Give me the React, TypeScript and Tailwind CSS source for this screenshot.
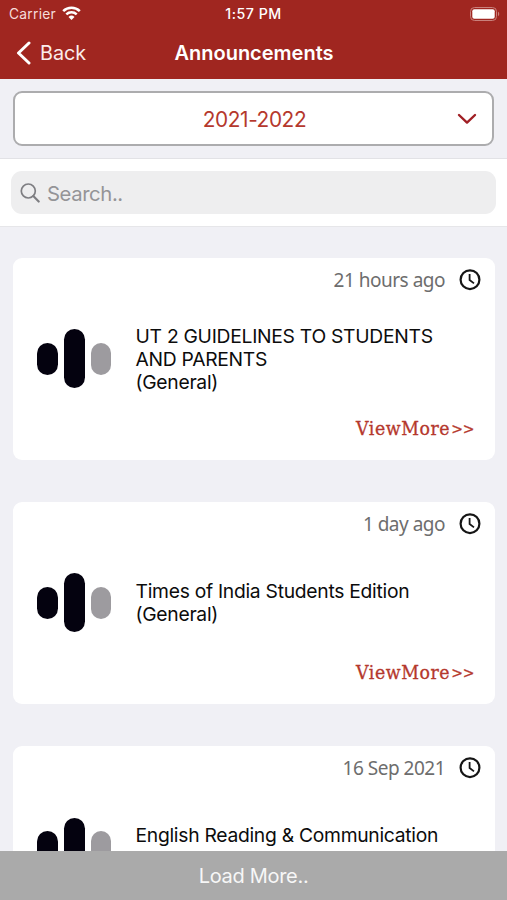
interface Announcement {
  date: string
  lines: string[]
  titleClass: string
  hasMore: boolean
}

const announcements: Announcement[] = [
  {
    date: '21 hours ago',
    lines: ['UT 2 GUIDELINES TO STUDENTS', 'AND PARENTS', '(General)'],
    titleClass: 'mt-[34.5px]',
    hasMore: true,
  },
  {
    date: '1 day ago',
    lines: ['Times of India Students Edition', '(General)'],
    titleClass: 'mt-[45px]',
    hasMore: true,
  },
  {
    date: '16 Sep 2021',
    lines: ['English Reading & Communication'],
    titleClass: 'mt-[45px]',
    hasMore: false,
  },
]

const StatusBar = () => (
  <div className="flex h-[27px] items-center px-[9px] text-[13.8px] leading-[27px]">
    <div className="flex flex-1 items-center gap-[6px]">
      <span className="pt-[1px] tracking-[0.25px] text-[#f6dcda]">Carrier</span>
      <svg className="-mt-[1px] h-[14px] w-[19px]" viewBox="0 0 19 14" fill="none" aria-hidden="true">
        <path d="M1.2 5.1a12 12 0 0 1 16.6 0" stroke="white" strokeWidth="2.6" />
        <path d="M4.3 8.3a7.5 7.5 0 0 1 10.4 0" stroke="white" strokeWidth="2.5" />
        <path d="M9.5 14 6.5 10.9a4.3 4.3 0 0 1 6 0Z" fill="white" />
      </svg>
    </div>
    <span className="text-[14.2px] font-medium tracking-[0.5px]">1:57 PM</span>
    <div className="flex flex-1 justify-end">
      <svg className="-mr-[2px] h-[14px] w-[30px]" viewBox="0 0 30 14" aria-hidden="true">
        <rect x="0.5" y="0.5" width="26" height="13" rx="4" fill="none" stroke="#c9817c" />
        <rect x="2.3" y="2.3" width="22.4" height="9.4" rx="2" fill="white" />
        <path d="M28 4.8c1.6.6 1.6 3.8 0 4.4Z" fill="#c9817c" />
      </svg>
    </div>
  </div>
)

const NavBar = () => (
  <div className="flex h-[52px] items-center px-[16px]">
    <button type="button" className="flex flex-1 items-center">
      <svg className="-mt-[1px] h-[24px] w-[15px]" viewBox="0 0 15 24" fill="none" aria-hidden="true">
        <path d="M13 2 2.5 12 13 22" stroke="white" strokeWidth="3" strokeLinecap="round" strokeLinejoin="round" />
      </svg>
      <span className="ml-[9px] pt-[1px] text-[19.8px] text-[#fbeceb]">Back</span>
    </button>
    <h1 className="pl-[1px] text-[20px] font-semibold">Announcements</h1>
    <div className="flex-1"></div>
  </div>
)

const BarsLogo = () => (
  <div className="flex items-center gap-[6.5px]">
    <div className="h-[32px] w-[20.5px] rounded-full bg-[#04020f]"></div>
    <div className="h-[59px] w-[20.5px] rounded-full bg-[#04020f]"></div>
    <div className="h-[32px] w-[20px] rounded-full bg-[#9d9b9f]"></div>
  </div>
)

const ClockIcon = () => (
  <svg className="h-[22px] w-[22px]" viewBox="0 0 22 22" fill="none" stroke="#151515" aria-hidden="true">
    <circle cx="11" cy="10.7" r="9.4" strokeWidth="2.2" />
    <path d="M10.6 5v6l4.4 3.4" strokeWidth="1.8" />
  </svg>
)

const AnnouncementCard = ({ item }: { item: Announcement }) => (
  <article className="flex h-[202px] shrink-0 rounded-[9px] bg-white">
    <div className="flex w-[123px] items-center pl-[24.5px]">
      <BarsLogo />
    </div>
    <div className="flex flex-1 flex-col">
      <div className="flex h-[33px] items-end justify-end pr-[14px]">
        <span className="mr-[13.5px] font-['Noto_Sans',sans-serif] text-[19px] leading-[21px] tracking-[-0.5px] text-[#6d6d6d]">
          {item.date}
        </span>
        <ClockIcon />
      </div>
      <div
        className={`text-[19.3px] leading-[23.2px] tracking-[-0.28px] whitespace-nowrap text-[#0c0c0c] ${item.titleClass}`}
      >
        {item.lines.map((line) => (
          <p key={line}>{line}</p>
        ))}
      </div>
      {item.hasMore && (
        <a
          href="#"
          className="mt-auto mr-[20px] mb-[18px] flex items-center gap-[1px] self-end font-['DejaVu_Serif_Condensed','DejaVu_Serif',serif] text-[19.3px] leading-[26px] tracking-[0.55px] text-[#b5382d] [-webkit-text-stroke:0.3px_#b5382d]"
        >
          ViewMore<span className="text-[15.5px] tracking-[0px]">&gt;&gt;</span>
        </a>
      )}
    </div>
  </article>
)

const App = () => {
  return (
    <div className="flex h-[900px] w-[507px] flex-col overflow-hidden bg-[#f0f0f5] font-['Inter',sans-serif]">
      <header className="h-[79px] shrink-0 bg-[#a02620] text-white">
        <StatusBar />
        <NavBar />
      </header>

      <div className="h-[80px] shrink-0 border-b border-[#e2e2e6] px-[13px] pt-[12px]">
        <button
          type="button"
          className="flex h-[55px] w-full items-center rounded-[9px] border-2 border-[#acacae] bg-white pr-[15px] pl-[37px] text-[#b5382d]"
        >
          <span className="flex-1 pt-[2px] text-center text-[20.8px] tracking-[-0.4px]">2021-2022</span>
          <svg className="h-[12px] w-[20px]" viewBox="0 0 20 12" fill="none" aria-hidden="true">
            <path d="M2 2 10 9.6 18 2" stroke="#a01f24" strokeWidth="2.4" strokeLinecap="round" strokeLinejoin="round" />
          </svg>
        </button>
      </div>

      <div className="h-[68px] shrink-0 border-b border-[#e6e6e9] bg-white px-[11px] pt-[12px]">
        <div className="flex h-[43px] items-center rounded-[11px] bg-[#eeeeef] pl-[9px]">
          <svg className="h-[20px] w-[20px]" viewBox="0 0 20 20" fill="none" stroke="#7e7e82" aria-hidden="true">
            <circle cx="8.3" cy="8" r="7" strokeWidth="1.7" />
            <path d="m13.3 13 5.4 5.6" strokeWidth="2.1" strokeLinecap="round" />
          </svg>
          <span className="ml-[7px] pt-[3px] text-[20.3px] tracking-[-0.4px] text-[#949497]">Search..</span>
        </div>
      </div>

      <main className="flex min-h-0 flex-1 flex-col gap-[42.3px] overflow-hidden px-[12.5px] pt-[30.5px]">
        {announcements.map((item) => (
          <AnnouncementCard key={item.date} item={item} />
        ))}
      </main>

      <button
        type="button"
        className="h-[49px] shrink-0 bg-[#aaaaaa] pt-[1px] text-[20px] leading-[30px] tracking-[-0.3px] text-[#f7f7f7]"
      >
        Load More..
      </button>
    </div>
  )
}

export default App
